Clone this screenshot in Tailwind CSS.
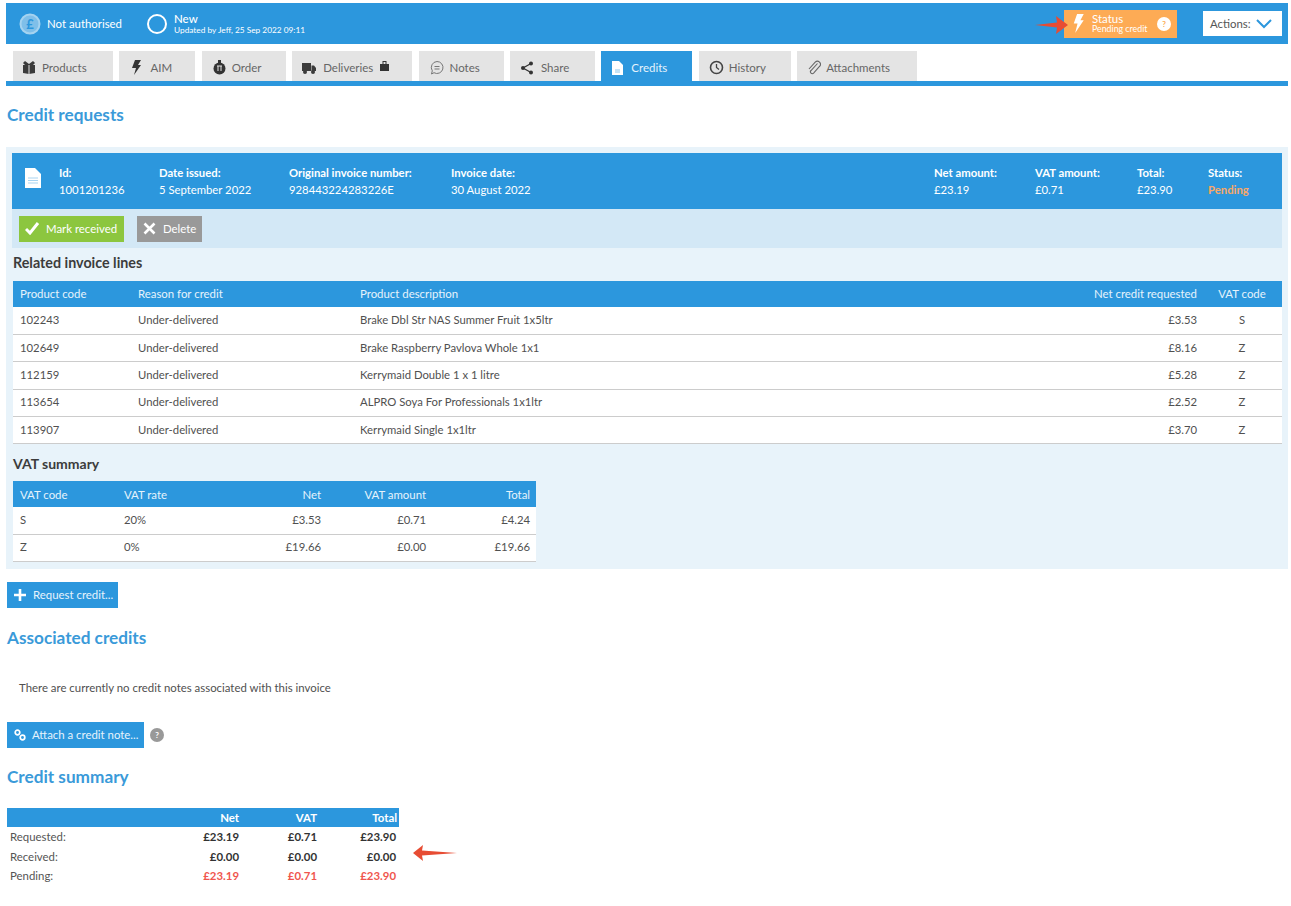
<!DOCTYPE html>
<html lang="en">
<head>
  <meta charset="UTF-8">
  <title>Credits</title>
  <script src="https://cdn.jsdelivr.net/npm/@tailwindcss/browser@4"></script>
</head>
<body class="bg-white text-[#505050] font-['Lato','Noto_Sans',sans-serif] text-[11.4px] overflow-hidden">
  <div class="w-[1291px] h-[906px] pl-[6px] pr-[3px] pt-[3px]">

    <!-- top bar -->
    <header class="relative h-[41px] bg-[#2c97dd] text-white flex items-center">
      <svg class="ml-[13px] w-[22px] h-[22px]" viewBox="0 0 22 22"><circle cx="11" cy="11" r="9.5" fill="#7fbfe9" stroke="#a5d3f0" stroke-width="2"/><text x="11" y="15.5" text-anchor="middle" font-size="13" font-weight="700" fill="#2c97dd" font-family="Lato">£</text></svg>
      <span class="ml-[6px] w-[99px] text-[11.4px]">Not authorised</span>
      <svg class="w-[22px] h-[22px]" viewBox="0 0 22 22"><circle cx="11" cy="11" r="9" fill="none" stroke="#fff" stroke-width="2"/></svg>
      <div class="ml-[6px] leading-none">
        <div class="text-[11.5px] font-medium">New</div>
        <div class="text-[8.3px] mt-[1px]">Updated by Jeff, 25 Sep 2022 09:11</div>
      </div>
      <div class="ml-auto w-[113px] h-[28px] bg-[#fdab55] flex items-center">
        <svg class="ml-[8px] w-[13px] h-[19px]" viewBox="0 0 13 20"><path d="M5 0h7L8.500 6.500H12L3 20l2.500-10H1.500z" fill="#fff"/></svg>
        <div class="ml-[7px] w-[65px] leading-none">
          <div class="text-[11.5px]">Status</div>
          <div class="text-[8.8px] mt-[1px]">Pending credit</div>
        </div>
        <span class="w-[14px] h-[14px] rounded-full bg-white text-[#fdab55] text-[8px] font-bold flex items-center justify-center">?</span>
      </div>
      <div class="ml-[26px] mr-[6px] w-[79px] h-[25px] bg-white text-[#555] flex items-center pl-[7px] text-[11.4px]">
        <span class="w-[46px]">Actions:</span>
        <svg class="w-[16px] h-[10px]" viewBox="0 0 16 10"><path d="M1 1l7 7 7-7" fill="none" stroke="#2c97dd" stroke-width="2"/></svg>
      </div>
      <svg class="absolute left-[1029px] top-[13px] w-[33px] h-[18px]" viewBox="0 0 33 18"><path d="M0 9l22-2.500L21 0l12 9-12 9 1-6.500z" fill="#e74c33"/></svg>
    </header>

    <!-- tabs -->
    <nav class="mt-[7px] h-[35px] border-b-[5px] border-[#2c97dd] pl-[7px] flex gap-[6.4px] text-[#666] text-[11.5px]">
      <a class="w-[100px] pt-[3px] bg-[#e4e4e4] flex items-center pl-[9px] gap-[6px]">
        <svg class="w-[14px] h-[13px]" viewBox="0 0 14 13"><path d="M1 4h12v8l-6 1-6-1z" fill="#3b3b3b"/><path d="M7 4v9" stroke="#e4e4e4"/><path d="M3 0l4 3 4-3 2 2-2 2H3L1 2z" fill="#3b3b3b"/></svg>Products</a>
      <a class="w-[76px] pt-[3px] bg-[#e4e4e4] flex items-center pl-[13px] gap-[9px]">
        <svg class="w-[9px] h-[15px]" viewBox="0 0 9 15"><path d="M3 0h6L6 5h3l-7 10 2-7H0z" fill="#333"/></svg>AIM</a>
      <a class="w-[84px] pt-[3px] bg-[#e4e4e4] flex items-center pl-[11px] gap-[6px]">
        <svg class="w-[13px] h-[15px]" viewBox="0 0 13 15"><circle cx="6.500" cy="8.500" r="6" fill="#333"/><rect x="5" y="0" width="3" height="3" fill="#333"/><path d="M4 6h5M5 6v5M8 6v5" stroke="#e4e4e4"/></svg>Order</a>
      <a class="w-[120px] pt-[3px] bg-[#e4e4e4] flex items-center pl-[10px] gap-[7px]">
        <svg class="w-[14px] h-[12px]" viewBox="0 0 14 12"><path d="M0 1h9v8H0zM9.500 3.500H12L14 6v3H9.500z" fill="#3b3b3b"/><circle cx="3" cy="10" r="2" fill="#3b3b3b"/><circle cx="11" cy="10" r="2" fill="#3b3b3b"/></svg>Deliveries
        <svg class="w-[9px] h-[10px] mb-[3px]" viewBox="0 0 9 10"><path d="M0 3h2.500V0h4v3H9v7H0z" fill="#333"/><path d="M3.500 1h2v2h-2z" fill="#e4e4e4"/></svg></a>
      <a class="w-[85px] pt-[3px] bg-[#e4e4e4] flex items-center pl-[11px] gap-[6px]">
        <svg class="w-[14px] h-[15px]" viewBox="0 0 14 15"><path d="M7 1.500a6 6 0 1 1-3 11.200L1.500 14l.8-3.200A6 6 0 0 1 7 1.500z" fill="none" stroke="#777"/><path d="M4.500 6.500h5M4.500 9h5" stroke="#777"/></svg>Notes</a>
      <a class="w-[85px] pt-[3px] bg-[#e4e4e4] flex items-center pl-[10px] gap-[7px]">
        <svg class="w-[14px] h-[14px]" viewBox="0 0 14 14"><path d="M11 2.500L3 7l8 4.500" fill="none" stroke="#333" stroke-width="1.300"/><circle cx="11" cy="2.500" r="2" fill="#333"/><circle cx="3" cy="7" r="2" fill="#333"/><circle cx="11" cy="11.500" r="2" fill="#333"/></svg>Share</a>
      <a class="w-[91px] pt-[3px] bg-[#2c97dd] text-[#e6f3fc] flex items-center pl-[11px] gap-[8px]">
        <svg class="w-[11px] h-[14px]" viewBox="0 0 11 14"><path d="M0 0h7l4 4v10H0z" fill="#fff"/><path d="M3 9h5M3 11h5" stroke="#8cc6ec"/></svg>Credits</a>
      <a class="w-[92px] pt-[3px] bg-[#e4e4e4] flex items-center pl-[10px] gap-[5px]">
        <svg class="w-[15px] h-[15px]" viewBox="0 0 15 15"><circle cx="7.500" cy="7.500" r="6" fill="none" stroke="#444" stroke-width="1.600"/><path d="M7.500 4v3.500l2.500 2" fill="none" stroke="#444" stroke-width="1.300"/></svg>History</a>
      <a class="w-[120px] pt-[3px] bg-[#e4e4e4] flex items-center pl-[10px] gap-[5px]">
        <svg class="w-[14px] h-[15px]" viewBox="0 0 14 15"><path d="M10.500 3.500L4 10.500a1.800 1.800 0 0 0 2.600 2.600L12.500 6.500a3 3 0 0 0-4.300-4.300L2 9" fill="none" stroke="#666" stroke-width="1.100"/></svg>Attachments</a>
    </nav>

    <h2 class="mt-[19px] ml-[1px] text-[17.2px] leading-[20px] font-bold text-[#3a9ad9]">Credit requests</h2>

    <!-- credit request panel -->
    <section class="mt-[22px] h-[422px] bg-[#e8f3fa] pt-[6px] pl-[6px] pr-[6px]">
      <div class="h-[56px] bg-[#2c97dd] text-white flex pt-[11px] leading-[17px] text-[11.3px]">
        <svg class="ml-[13px] mt-[4px] w-[16px] h-[20px]" viewBox="0 0 16 20"><path d="M0 0h10l6 6v14H0z" fill="#fff"/><path d="M3 10h10M3 12.500h10M3 15h10" stroke="#a9d4f1"/></svg>
        <div class="ml-[18px] w-[100px]"><b>Id:</b><br>1001201236</div>
        <div class="w-[130px]"><b>Date issued:</b><br>5 September 2022</div>
        <div class="w-[162px]"><b>Original invoice number:</b><br>928443224283226E</div>
        <div class="w-[483px]"><b>Invoice date:</b><br>30 August 2022</div>
        <div class="w-[101px]"><b>Net amount:</b><br>£23.19</div>
        <div class="w-[102px]"><b>VAT amount:</b><br>£0.71</div>
        <div class="w-[71px]"><b>Total:</b><br>£23.90</div>
        <div><b>Status:</b><br><b class="text-[#f9a866]">Pending</b></div>
      </div>
      <div class="h-[39px] bg-[#d3e8f6] flex items-center pl-[7px] gap-[13px]">
        <button class="h-[26px] w-[105px] bg-[#8cc63f] text-white flex items-center pl-[6px] gap-[6px] whitespace-nowrap">
          <svg class="w-[15px] h-[13px]" viewBox="0 0 15 13"><path d="M1 7l4 4 8-10" fill="none" stroke="#fff" stroke-width="3"/></svg>Mark received</button>
        <button class="h-[26px] w-[65px] bg-[#999] text-white flex items-center pl-[6px] gap-[7px]">
          <svg class="w-[13px] h-[13px]" viewBox="0 0 13 13"><path d="M1.500 1.500l10 10M11.500 1.500l-10 10" stroke="#fff" stroke-width="2.600"/></svg>Delete</button>
      </div>

      <h3 class="mt-[6px] ml-[1px] text-[14.300px] leading-[18px] font-bold text-[#3c3c3c]">Related invoice lines</h3>
      <table class="mt-[9px] ml-[1px] w-[1269px] table-fixed bg-white border-collapse">
        <thead class="bg-[#2c97dd] text-[#e6f3fc] text-left">
          <tr class="h-[26px]">
            <th class="w-[118px] pl-[7px] font-normal">Product code</th>
            <th class="w-[222px] pl-[7px] font-normal">Reason for credit</th>
            <th class="pl-[7px] font-normal">Product description</th>
            <th class="w-[220px] pr-[7px] font-normal text-right">Net credit requested</th>
            <th class="w-[78px] font-normal text-center pr-[2px]">VAT code</th>
          </tr>
        </thead>
        <tbody class="text-[11.3px]">
          <tr class="h-[27.400px] border-b border-[#ccc]"><td class="pl-[7px]">102243</td><td class="pl-[7px]">Under-delivered</td><td class="pl-[7px]">Brake Dbl Str NAS Summer Fruit 1x5ltr</td><td class="pr-[7px] text-right">£3.53</td><td class="text-center pr-[2px]">S</td></tr>
          <tr class="h-[27.400px] border-b border-[#ccc]"><td class="pl-[7px]">102649</td><td class="pl-[7px]">Under-delivered</td><td class="pl-[7px]">Brake Raspberry Pavlova Whole 1x1</td><td class="pr-[7px] text-right">£8.16</td><td class="text-center pr-[2px]">Z</td></tr>
          <tr class="h-[27.400px] border-b border-[#ccc]"><td class="pl-[7px]">112159</td><td class="pl-[7px]">Under-delivered</td><td class="pl-[7px]">Kerrymaid Double 1 x 1 litre</td><td class="pr-[7px] text-right">£5.28</td><td class="text-center pr-[2px]">Z</td></tr>
          <tr class="h-[27.400px] border-b border-[#ccc]"><td class="pl-[7px]">113654</td><td class="pl-[7px]">Under-delivered</td><td class="pl-[7px]">ALPRO Soya For Professionals 1x1ltr</td><td class="pr-[7px] text-right">£2.52</td><td class="text-center pr-[2px]">Z</td></tr>
          <tr class="h-[27.400px] border-b border-[#ccc]"><td class="pl-[7px]">113907</td><td class="pl-[7px]">Under-delivered</td><td class="pl-[7px]">Kerrymaid Single 1x1ltr</td><td class="pr-[7px] text-right">£3.70</td><td class="text-center pr-[2px]">Z</td></tr>
        </tbody>
      </table>

      <h3 class="mt-[11px] ml-[1px] text-[14px] leading-[18px] font-bold text-[#3c3c3c]">VAT summary</h3>
      <table class="mt-[8px] ml-[1px] w-[523px] table-fixed bg-white border-collapse">
        <thead class="bg-[#2c97dd] text-[#e6f3fc] text-left">
          <tr class="h-[26px]">
            <th class="w-[104px] pl-[7px] font-normal">VAT code</th>
            <th class="w-[100px] pl-[7px] font-normal">VAT rate</th>
            <th class="w-[104px] font-normal text-right">Net</th>
            <th class="w-[105px] font-normal text-right">VAT amount</th>
            <th class="pr-[6px] font-normal text-right">Total</th>
          </tr>
        </thead>
        <tbody class="text-[11.3px]">
          <tr class="h-[27px] border-b border-[#ccc]"><td class="pl-[7px]">S</td><td class="pl-[7px]">20%</td><td class="text-right">£3.53</td><td class="text-right">£0.71</td><td class="pr-[6px] text-right">£4.24</td></tr>
          <tr class="h-[27px] border-b border-[#ccc]"><td class="pl-[7px]">Z</td><td class="pl-[7px]">0%</td><td class="text-right">£19.66</td><td class="text-right">£0.00</td><td class="pr-[6px] text-right">£19.66</td></tr>
        </tbody>
      </table>
    </section>

    <button class="mt-[13px] ml-[1px] h-[26px] w-[111px] bg-[#2c97dd] text-[#e6f3fc] flex items-center pl-[6px] gap-[6px] whitespace-nowrap">
      <svg class="w-[14px] h-[14px]" viewBox="0 0 14 14"><path d="M7 1v12M1 7h12" stroke="#fff" stroke-width="2.600"/></svg>Request credit...</button>

    <h2 class="mt-[20px] ml-[1px] text-[17.2px] leading-[20px] font-bold text-[#3a9ad9]">Associated credits</h2>
    <p class="mt-[31px] ml-[13px] leading-[17px]">There are currently no credit notes associated with this invoice</p>

    <div class="mt-[26px] ml-[1px] flex items-center gap-[6px]">
      <button class="h-[26px] w-[137px] bg-[#2c97dd] text-[#e6f3fc] flex items-center pl-[7px] gap-[6px] whitespace-nowrap">
        <svg class="w-[12px] h-[12px]" viewBox="0 0 12 12"><circle cx="3.500" cy="3.500" r="2.300" fill="none" stroke="#fff" stroke-width="1.700"/><circle cx="8.500" cy="8.500" r="2.300" fill="none" stroke="#fff" stroke-width="1.700"/></svg>Attach a credit note...</button>
      <span class="w-[14px] h-[14px] rounded-full bg-[#999] text-white text-[8px] font-bold flex items-center justify-center">?</span>
    </div>

    <h2 class="mt-[19px] ml-[1px] text-[17.2px] leading-[20px] font-bold text-[#3a9ad9]">Credit summary</h2>

    <div class="relative">
      <table class="mt-[21px] ml-[1px] w-[392px] table-fixed border-collapse">
        <thead class="bg-[#2c97dd] text-white">
          <tr class="h-[19px]">
            <th class="w-[120px]"></th>
            <th class="w-[112px] font-bold text-right">Net</th>
            <th class="w-[78px] font-bold text-right">VAT</th>
            <th class="pr-[2px] font-bold text-right">Total</th>
          </tr>
        </thead>
        <tbody class="font-bold text-[#333]">
          <tr class="h-[19.500px]"><td class="pl-[3px] font-normal text-[#555]">Requested:</td><td class="text-right">£23.19</td><td class="text-right">£0.71</td><td class="pr-[3px] text-right">£23.90</td></tr>
          <tr class="h-[19.500px]"><td class="pl-[3px] font-normal text-[#555]">Received:</td><td class="text-right">£0.00</td><td class="text-right">£0.00</td><td class="pr-[3px] text-right">£0.00</td></tr>
          <tr class="h-[19.500px] text-[#f0564e]"><td class="pl-[3px] font-normal text-[#555]">Pending:</td><td class="text-right">£23.19</td><td class="text-right">£0.71</td><td class="pr-[3px] text-right">£23.90</td></tr>
        </tbody>
      </table>
      <svg class="absolute left-[407px] top-[37px] w-[44px] h-[16px]" viewBox="0 0 44 16"><path d="M0 8l10-8-1 5.500L44 8 9 10.500 10 16z" fill="#e74c33"/></svg>
    </div>
  </div>
</body>
</html>
